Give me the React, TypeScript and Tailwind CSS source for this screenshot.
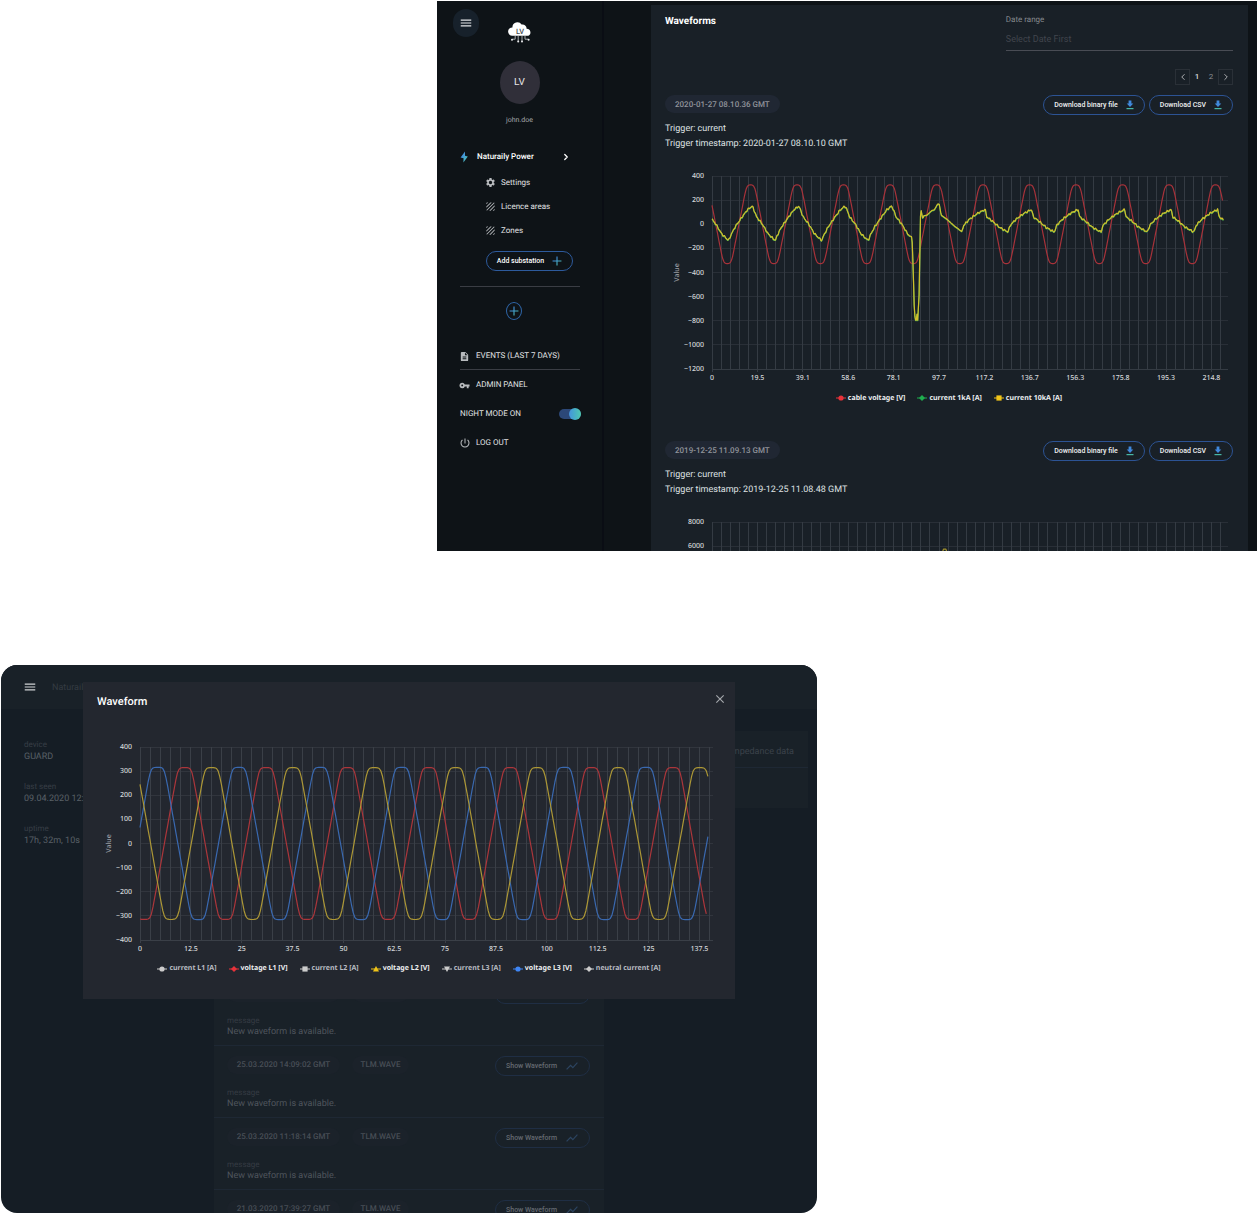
import React from "react";
import {
  MdClose,
  MdDescription,
  MdMenu,
  MdPowerSettingsNew,
  MdSettings,
  MdShowChart,
  MdTexture,
  MdVpnKey,
} from "react-icons/md";
import { LuChevronLeft, LuChevronRight } from "react-icons/lu";

type Point = [number, number];
type Marker = "circle" | "diamond" | "square" | "triangle" | "triangle-down";

interface Series {
  color: string;
  points: Point[];
}

interface LegendEntry {
  label: string;
  color: string;
  marker: Marker;
  active: boolean;
}

/* ---------- wave data ---------- */

function trapezoid(t: number, peak: number, amplitude: number, sharpness: number) {
  let d = Math.abs(((((t - peak) % 20) + 20) % 20) / 20);
  if (d > 0.5) d = 1 - d;
  const u = (0.25 - d) * 6;
  return (amplitude * u) / Math.pow(1 + Math.pow(Math.abs(u), sharpness), 1 / sharpness);
}

function sample(end: number, step: number, fn: (t: number) => number): Point[] {
  const out: Point[] = [];
  for (let t = 0; t <= end; t += step) out.push([t, fn(t)]);
  return out;
}

function interpolate(table: Point[], t: number) {
  for (let i = 1; i < table.length; i++) {
    const [t0, v0] = table[i - 1];
    const [t1, v1] = table[i];
    if (t <= t1) return v0 + ((v1 - v0) * (t - t0)) / (t1 - t0);
  }
  return table[table.length - 1][1];
}

const BEFORE_FAULT: Point[] = [
  [0, 150], [0.6, 138], [2.1, 62], [4.6, 0], [7, -78], [9.7, -128], [10.2, -130],
  [11, -90], [12.8, -23], [15.8, 60], [18, 118], [20, 150],
];
const FAULT: Point[] = [
  [84.8, -95], [86, -103], [86.5, -330], [87.1, -740], [87.6, -795], [87.9, -795], [88.2, -745],
  [88.5, -795], [89.1, -585], [89.7, 70], [90, 112], [90.7, 43], [91.1, 72], [92.4, 75], [94.6, 115],
  [95.6, 118], [97.1, 170], [97.8, 165], [98.6, 76], [101, 43], [104.6, -20], [107.4, -59],
];
const AFTER_FAULT: Point[] = [
  [0, 123], [0.7, 62], [3.1, 27], [6.2, -25], [9.3, -59], [9.9, -60],
  [10.8, -7], [13.3, 43], [16.9, 93], [20, 123],
];

function current(t: number) {
  const noise = 5 * Math.sin(t * 3.7) + 4 * Math.sin(t * 6.1 + 1);
  if (t < 84.8) return interpolate(BEFORE_FAULT, (t + 2.9) % 20) + noise;
  if (t < 107.4) return interpolate(FAULT, t);
  return interpolate(AFTER_FAULT, (t - 97.5) % 20) + noise;
}

const CURRENT = sample(220, 0.3, current);
const CABLE_VOLTAGE = sample(220, 0.4, (t) => trapezoid(t, 16.6, 328, 9));

const TOP_SERIES: Series[] = [
  { color: "#a8323a", points: CABLE_VOLTAGE },
  { color: "#35a853", points: CURRENT.map(([t, v]) => [t, v - 4] as Point) },
  { color: "#d2be2b", points: CURRENT },
];

const SECOND_SERIES: Series[] = [
  {
    color: "#a3922c",
    points: [[98, 0], [99, 5400], [99.6, 5750], [100.6, 5750], [101.2, 5400], [102, 0]],
  },
];

const MODAL_SERIES: Series[] = [
  { color: "#ab363b", points: sample(139.6, 0.4, (t) => trapezoid(t, 11, 315, 13)) },
  { color: "#3a69b0", points: sample(140, 0.4, (t) => trapezoid(t, 4.3, 316, 13)) },
  { color: "#ac9736", points: sample(140, 0.4, (t) => trapezoid(t, 17.6, 315, 13)) },
];

/* ---------- chart ---------- */

interface ChartProps {
  title: string;
  width: number;
  plotLeft: number;
  plotRight: number;
  tickGap: number;
  unitsPerLabel: number;
  xLabels: string[];
  yLabels: number[];
  yMax: number;
  yMin: number;
  yStep: number;
  axisTitle?: string;
  grid: string;
  series: Series[];
}

const PLOT_TOP = 10;
const PLOT_HEIGHT = 193;
const CHART_HEIGHT = 222;
const AXIS_TITLE_X = 14;

function Chart(p: ChartProps) {
  const bottom = PLOT_TOP + PLOT_HEIGHT;
  const px = (t: number) => p.plotLeft + (t / p.unitsPerLabel) * p.tickGap * 5;
  const py = (v: number) => PLOT_TOP + ((p.yMax - v) / (p.yMax - p.yMin)) * PLOT_HEIGHT;
  const yTicks: number[] = [];
  for (let v = p.yMax; v >= p.yMin; v -= p.yStep) yTicks.push(v);
  const columns = Array.from({ length: 57 }, (_, i) => p.plotLeft + i * p.tickGap);
  return (
    <svg
      role="img"
      aria-label={p.title}
      viewBox={`0 0 ${p.width} ${CHART_HEIGHT}`}
      className="block h-auto w-full font-['Noto_Sans',sans-serif] text-[7px] font-medium"
    >
      <g stroke={p.grid} strokeWidth="1" shapeRendering="crispEdges">
        {yTicks.map((v) => (
          <line key={v} x1={p.plotLeft} x2={p.plotRight} y1={py(v)} y2={py(v)} strokeOpacity={v === p.yMin ? 1 : 0.6} />
        ))}
        {columns.map((x, i) => (
          <line key={i} x1={x} x2={x} y1={PLOT_TOP} y2={bottom + (i % 5 === 0 ? 3 : 0)} />
        ))}
      </g>
      <g fill="none" strokeWidth="1.2" strokeLinejoin="round">
        {p.series.map((s, i) => (
          <polyline
            key={i}
            stroke={s.color}
            points={s.points.map(([t, v]) => `${px(t).toFixed(1)},${py(v).toFixed(1)}`).join(" ")}
          />
        ))}
      </g>
      <g fill="#d5d7da">
        {p.yLabels.map((v) => (
          <text key={v} x={p.plotLeft - 8} y={py(v) + 2} textAnchor="end">
            {v < 0 ? `−${-v}` : v}
          </text>
        ))}
        {p.xLabels.map((label, i) => (
          <text key={label} x={p.plotLeft + i * p.tickGap * 5} y={bottom + 11} textAnchor="middle">
            {label}
          </text>
        ))}
      </g>
      {p.axisTitle && (
        <text
          fill="#9a9da2"
          textAnchor="middle"
          transform={`translate(${AXIS_TITLE_X} ${PLOT_TOP + PLOT_HEIGHT / 2}) rotate(-90)`}
        >
          {p.axisTitle}
        </text>
      )}
    </svg>
  );
}

function MarkerIcon({ marker, color }: { marker: Marker; color: string }) {
  return (
    <svg viewBox="0 0 10 8" className="h-2 w-2.5 shrink-0" fill={color} aria-hidden="true">
      <rect x="0" y="3.5" width="10" height="1" />
      {marker === "circle" && <circle cx="5" cy="4" r="2.6" />}
      {marker === "diamond" && <path d="M5 1 8 4 5 7 2 4Z" />}
      {marker === "square" && <rect x="2.4" y="1.4" width="5.2" height="5.2" />}
      {marker === "triangle" && <path d="M5 1 8 6.6H2Z" />}
      {marker === "triangle-down" && <path d="M5 7 2 1.4H8Z" />}
    </svg>
  );
}

function Legend({ entries }: { entries: LegendEntry[] }) {
  return (
    <ul className="mt-1 flex h-3 items-center justify-center gap-3 font-['Noto_Sans',sans-serif] text-[7px] font-bold whitespace-nowrap">
      {entries.map((e) => (
        <li key={e.label} className="flex items-center gap-0.5">
          <MarkerIcon marker={e.marker} color={e.color} />
          <span className={e.active ? "text-[#eceef0]" : "text-[#b9bcc2]"}>{e.label}</span>
        </li>
      ))}
    </ul>
  );
}

/* ---------- icons ---------- */

function GradientDefs() {
  return (
    <svg width="0" height="0" className="absolute" aria-hidden="true">
      <defs>
        <linearGradient id="accent" x1="0" y1="0" x2="1" y2="1">
          <stop offset="0.2" stopColor="#3f86e0" />
          <stop offset="1" stopColor="#4fd0b0" />
        </linearGradient>
      </defs>
    </svg>
  );
}

function CloudLogo() {
  return (
    <svg viewBox="0 0 24 22" className="mt-3 h-[22px] w-6" role="img" aria-label="LV">
      <path
        d="M4.2 14.8A4.2 4.2 0 0 1 4.4 6.4 5 5 0 0 1 13.6 3.6 4 4 0 0 1 18.6 7.8 3.7 3.7 0 0 1 20.4 14.8Z"
        fill="#fff"
      />
      <g stroke="#c9ccce" strokeWidth="0.8" fill="none">
        <path d="M7.2 14.6V18.2H4.4M10.2 14.6V20.6M14 14.6V20.6M17 14.6V18.2H20.2" />
      </g>
      <g fill="#e9eaec">
        <circle cx="4" cy="18.8" r="1" />
        <circle cx="10.2" cy="20.6" r="1" />
        <circle cx="14" cy="20.6" r="1" />
        <circle cx="20.6" cy="18.8" r="1" />
      </g>
      <text x="12" y="13" textAnchor="middle" fill="#4a4f55" fontSize="7.5" fontWeight="500">
        LV
      </text>
    </svg>
  );
}

function BoltIcon() {
  return (
    <svg viewBox="0 0 9 12" className="h-3 w-[9px]" aria-hidden="true">
      <path d="M5 0.6 0.6 6.4 3.6 7.2 3.4 11.4 7.8 5.6 5 4.8Z" fill="url(#accent)" />
    </svg>
  );
}

function PlusIcon() {
  return (
    <svg viewBox="0 0 9 9" className="size-2.5" aria-hidden="true">
      <path d="M4 0.5H5V4H8.5V5H5V8.5H4V5H0.5V4H4Z" fill="url(#accent)" />
    </svg>
  );
}

function DownloadIcon() {
  return (
    <svg viewBox="0 0 8 10" className="h-2.5 w-2" aria-hidden="true">
      <path d="M2.6 0.5H5.4V3.6H7.3L4 7 0.7 3.6H2.6Z" fill="#4089dd" />
      <rect x="0.5" y="8" width="7" height="1.2" fill="#48b7a6" />
    </svg>
  );
}

/* ---------- waveforms page ---------- */

function NavLink({ icon, children }: { icon: React.ReactNode; children: React.ReactNode }) {
  return (
    <a href="#" className="flex h-4 items-center">
      <span className="-ml-px flex w-[17px] text-[#b8bbbe]">{icon}</span>
      {children}
    </a>
  );
}

function Sidebar() {
  const sub = [
    { label: "Settings", icon: <MdSettings className="size-[11px]" /> },
    { label: "Licence areas", icon: <MdTexture className="size-[11px]" /> },
    { label: "Zones", icon: <MdTexture className="size-[11px]" /> },
  ];
  return (
    <aside className="w-[167px] shrink-0 border-r-2 border-[#0a0d14] text-[8px] text-[#e0e2e4]">
      <header className="grid grid-cols-[1fr_auto_1fr] items-start px-4 pt-2">
        <button
          type="button"
          aria-label="Menu"
          className="flex h-7 w-[26px] items-center justify-center rounded-full bg-[#17212b] text-[#e3e5e7]"
        >
          <MdMenu className="size-3.5" />
        </button>
        <CloudLogo />
      </header>
      <div className="mx-auto mt-[18px] flex h-[43px] w-10 items-center justify-center rounded-[50%] bg-[#302f39] text-[10px] text-[#e6e6e8]">
        LV
      </div>
      <p className="mt-[9px] text-center text-[7px] leading-[14px] text-[#a4a6a9]">john.doe</p>
      <nav className="mt-[22px] pr-[21px] pl-[23px]">
        <a href="#" className="flex h-4 items-center font-medium text-white">
          <span className="w-[17px]">
            <BoltIcon />
          </span>
          Naturaily Power
          <LuChevronRight className="ml-auto mr-2.5 size-2.5" strokeWidth={3} />
        </a>
        <ul className="mt-1.5 ml-[25px]">
          {sub.map((s) => (
            <li key={s.label}>
              <a href="#" className="flex h-6 items-center">
                <span className="flex w-4 pb-0.5 text-[#b8bbbe]">{s.icon}</span>
                {s.label}
              </a>
            </li>
          ))}
        </ul>
        <button
          type="button"
          className="mt-2 ml-[26px] flex h-5 w-[87px] items-center justify-center gap-2 rounded-full border border-[#2d5a9c] text-[7px] font-medium text-white"
        >
          Add substation
          <PlusIcon />
        </button>
        <hr className="mt-[15px] mr-px border-[#3a3d44]" />
        <button
          type="button"
          aria-label="Add"
          className="mt-[15px] ml-[46px] flex h-[18px] w-4 items-center justify-center rounded-[50%] border border-[#2f66a8]"
        >
          <PlusIcon />
        </button>
        <div className="mt-7">
          <NavLink icon={<MdDescription className="size-[11px]" />}>EVENTS (LAST 7 DAYS)</NavLink>
        </div>
        <hr className="mt-[5px] mr-px mb-[7px] border-[#3a3d44]" />
        <NavLink icon={<MdVpnKey className="size-[11px]" />}>ADMIN PANEL</NavLink>
        <label className="mt-[13px] flex h-4 items-center justify-between">
          NIGHT MODE ON
          <input
            type="checkbox"
            role="switch"
            defaultChecked
            className="flex h-2.5 w-[22px] appearance-none items-center justify-end rounded-full bg-[#2c4878] before:size-3 before:shrink-0 before:rounded-full before:bg-linear-to-r before:from-[#4593dc] before:to-[#4fc9ae]"
          />
        </label>
        <div className="mt-[13px]">
          <NavLink icon={<MdPowerSettingsNew className="size-3" />}>LOG OUT</NavLink>
        </div>
      </nav>
    </aside>
  );
}

function DownloadButton({ children }: { children: React.ReactNode }) {
  return (
    <button
      type="button"
      className="flex h-5 items-center gap-2 rounded-full border border-[#2c5394] px-2.5 text-[7px] font-medium whitespace-nowrap text-[#f0f1f2]"
    >
      {children}
      <DownloadIcon />
    </button>
  );
}

function Recording({ date, timestamp, children }: { date: string; timestamp: string; children: React.ReactNode }) {
  return (
    <article className="mb-[37px] text-[9px] leading-[15px] text-[#dfe1e3]">
      <div className="flex items-start justify-between">
        <time className="flex h-[18px] items-center rounded-full bg-[#202733] px-2.5 text-[8px] font-medium text-[#90939a]">
          {date}
        </time>
        <div className="flex gap-1">
          <DownloadButton>Download binary file</DownloadButton>
          <DownloadButton>Download CSV</DownloadButton>
        </div>
      </div>
      <p className="mt-[7px]">Trigger: current</p>
      <p>Trigger timestamp: {timestamp}</p>
      <div className="mt-3.5">{children}</div>
    </article>
  );
}

const X_TOP = ["0", "19.5", "39.1", "58.6", "78.1", "97.7", "117.2", "136.7", "156.3", "175.8", "195.3", "214.8"];
const X_MODAL = ["0", "12.5", "25", "37.5", "50", "62.5", "75", "87.5", "100", "112.5", "125", "137.5"];

function WaveformsPage() {
  return (
    <section className="ml-[436px] flex h-[550px] overflow-hidden bg-[#0e1317]">
      <Sidebar />
      <main className="min-w-0 flex-1 pt-1 pr-[9px] pl-[47px]">
        <div className="bg-[#192027] pt-2 pr-[15px] pl-[14px]">
          <header className="flex justify-between">
            <h1 className="text-[10px] leading-[18px] font-bold text-white">Waveforms</h1>
            <label className="block w-[40%] text-[8px] leading-[14px] text-[#85888d]">
              Date range
              <input
                type="text"
                placeholder="Select Date First"
                className="block h-6 w-full border-b border-[#494c54] text-[9px] outline-none placeholder:text-[#41454d]"
              />
            </label>
          </header>
          <nav aria-label="Pages" className="mt-[18px] mb-2.5 flex h-4 items-center justify-end text-[8px] text-[#8b8e93]">
            <button type="button" aria-label="Previous page" className="flex h-4 w-[15px] items-center justify-center border border-[#2a3037] text-[#c6c8ca]">
              <LuChevronLeft className="size-2.5" />
            </button>
            <button type="button" className="w-3.5 font-medium text-[#d6d8da]">1</button>
            <button type="button" className="w-3.5">2</button>
            <button type="button" aria-label="Next page" className="flex h-4 w-[15px] items-center justify-center border border-[#2a3037] text-[#c6c8ca]">
              <LuChevronRight className="size-2.5" />
            </button>
          </nav>
          <Recording date="2020-01-27 08.10.36 GMT" timestamp="2020-01-27 08.10.10 GMT">
            <Chart
              title="Waveform of 27 January 2020"
              width={568}
              plotLeft={47}
              plotRight={563}
              tickGap={9.08}
              unitsPerLabel={19.53}
              xLabels={X_TOP}
              yLabels={[400, 200, 0, -200, -400, -600, -800, -1000, -1200]}
              yMax={400}
              yMin={-1200}
              yStep={200}
              axisTitle="Value"
              grid="#343b43"
              series={TOP_SERIES}
            />
            <Legend
              entries={[
                { label: "cable voltage [V]", color: "#e8323a", marker: "circle", active: true },
                { label: "current 1kA [A]", color: "#1fae4f", marker: "diamond", active: true },
                { label: "current 10kA [A]", color: "#f0c419", marker: "square", active: true },
              ]}
            />
          </Recording>
          <Recording date="2019-12-25 11.09.13 GMT" timestamp="2019-12-25 11.08.48 GMT">
            <Chart
              title="Waveform of 25 December 2019"
              width={568}
              plotLeft={47}
              plotRight={563}
              tickGap={9.08}
              unitsPerLabel={19.53}
              xLabels={[]}
              yLabels={[8000, 6000]}
              yMax={8000}
              yMin={-8000}
              yStep={2000}
              grid="#343b43"
              series={SECOND_SERIES}
            />
          </Recording>
        </div>
      </main>
    </section>
  );
}

/* ---------- device page ---------- */

const DETAILS = [
  { name: "device", value: "GUARD", message: "" },
  { name: "last seen", value: "09.04.2020 12:", message: "" },
  { name: "uptime", value: "17h, 32m, 10s", message: "" },
];

const MESSAGE = "New waveform is available.";
const EVENTS = [
  { date: "", message: MESSAGE },
  { date: "25.03.2020 14:09:02 GMT", message: MESSAGE },
  { date: "25.03.2020 11:18:14 GMT", message: MESSAGE },
  { date: "21.03.2020 17:39:27 GMT", message: "" },
];

function EventRow({ date, message }: { date: string; message: string }) {
  return (
    <li className="h-[72px] border-b border-[#1e2834] pt-2.5 pr-[14px] pl-[13px]">
      <div className="flex items-start text-[8px] font-medium text-[#484e56]">
        <time className="flex h-[18px] w-[113px] items-center justify-center rounded-full bg-[#1b222a]">{date}</time>
        <span className="ml-3 flex h-[18px] w-[57px] items-center justify-center rounded-full bg-[#1b222a]">
          {date && "TLM.WAVE"}
        </span>
        <button
          type="button"
          aria-label="Show Waveform"
          className="ml-auto flex h-5 w-[95px] items-center justify-center gap-2 rounded-full border border-[#1f2e44] text-[7px] font-medium text-[#666b72]"
        >
          {date && "Show Waveform"}
          <MdShowChart className="size-3.5 text-[#2c4460]" />
        </button>
      </div>
      {message && (
        <>
          <p className="mt-3 text-[8px] leading-[10px] text-[#353b43]">message</p>
          <p className="text-[9px] leading-[13px] text-[#4f555d]">{message}</p>
        </>
      )}
    </li>
  );
}

function WaveformModal() {
  return (
    <div role="dialog" aria-label="Waveform" className="absolute inset-x-[82px] top-[17px] h-[317px] bg-[#23272f] px-[14px]">
      <header className="flex h-[55px] items-start justify-between pt-2.5">
        <h2 className="text-[11px] leading-[20px] font-medium text-white">Waveform</h2>
        <button type="button" aria-label="Close" className="-mr-1.5 text-[#a4a7ab]">
          <MdClose className="size-3.5" />
        </button>
      </header>
      <Chart
        title="Phase voltages"
        width={624}
        plotLeft={43}
        plotRight={616}
        tickGap={10.17}
        unitsPerLabel={12.5}
        xLabels={X_MODAL}
        yLabels={[400, 300, 200, 100, 0, -100, -200, -300, -400]}
        yMax={400}
        yMin={-400}
        yStep={100}
        axisTitle="Value"
        grid="#3a3f47"
        series={MODAL_SERIES}
      />
      <Legend
        entries={[
          { label: "current L1 [A]", color: "#cccccc", marker: "circle", active: false },
          { label: "voltage L1 [V]", color: "#e8323a", marker: "diamond", active: true },
          { label: "current L2 [A]", color: "#cccccc", marker: "square", active: false },
          { label: "voltage L2 [V]", color: "#f0c419", marker: "triangle", active: true },
          { label: "current L3 [A]", color: "#cccccc", marker: "triangle-down", active: false },
          { label: "voltage L3 [V]", color: "#3f86f5", marker: "circle", active: true },
          { label: "neutral current [A]", color: "#cccccc", marker: "diamond", active: false },
        ]}
      />
    </div>
  );
}

function DevicePage() {
  return (
    <section className="relative mt-[114px] mr-[440px] flex h-[548px] flex-col overflow-hidden rounded-[16px] bg-[#151d25]">
      <header className="flex h-11 shrink-0 items-center bg-[#192128] pl-[22px] text-[9px] leading-none text-[#343b42]">
        <button type="button" aria-label="Menu" className="mr-[15px] text-[#d0d2d4]">
          <MdMenu className="size-3.5" />
        </button>
        <span className="pt-0.5">Naturaily</span>
      </header>
      <div className="flex flex-1 items-start pt-[22px] pr-[9px]">
        <dl className="w-[213px] pt-2 pl-[23px]">
          {DETAILS.map((d) => (
            <div key={d.name} className="h-[42px]">
              <dt className="text-[8px] leading-3 text-[#373e46]">{d.name}</dt>
              <dd className="text-[9px] leading-3 text-[#596067]">{d.value}</dd>
            </div>
          ))}
        </dl>
        <ul className="flex-1 bg-[#192128] pt-[243px]">
          {EVENTS.map((e) => (
            <EventRow key={e.date} date={e.date} message={e.message} />
          ))}
        </ul>
        <div className="ml-3.5 h-[77px] w-[190px] bg-[#192128]">
          <h3 className="h-[37px] border-b border-[#1e2834] pr-[14px] text-right text-[9px] leading-[42px] text-[#3b424a]">
            Impedance data
          </h3>
        </div>
      </div>
      <WaveformModal />
    </section>
  );
}

export default function App() {
  return (
    <div className="bg-white p-px font-[Roboto,sans-serif] [text-rendering:geometricPrecision]">
      <GradientDefs />
      <WaveformsPage />
      <DevicePage />
    </div>
  );
}
